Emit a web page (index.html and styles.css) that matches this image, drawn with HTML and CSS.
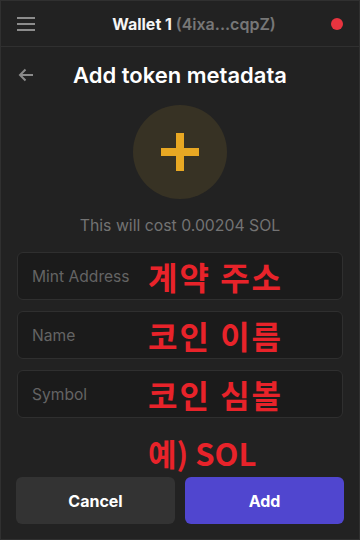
FILE: index.html
```html
<!DOCTYPE html>
<html lang="en">
<head>
    <meta charset="UTF-8">
    <meta name="viewport" content="width=device-width, initial-scale=1.0">
    <title>Add token metadata</title>
    <link rel="stylesheet" href="styles.css">
</head>
<body>
    <div class="app">
        <!-- Top bar -->
        <div class="top-bar">
            <div class="menu-icon">
                <span></span><span></span><span></span>
            </div>
            <div class="wallet-title">Wallet 1 <span class="wallet-address">(4ixa...cqpZ)</span></div>
            <div class="status-dot"></div>
        </div>

        <!-- Page heading -->
        <div class="page-header">
            <svg class="back-arrow" width="16" height="14" viewBox="0 0 16 14">
                <path d="M15 7H2M7.5 1.5L2 7l5.5 5.5" fill="none" stroke="#8a8a8a" stroke-width="2"/>
            </svg>
            <h1>Add token metadata</h1>
        </div>

        <div class="token-icon">
            <svg width="38" height="38" viewBox="0 0 38 38">
                <rect x="15" y="0" width="8" height="38" fill="#e8a823"/>
                <rect x="0" y="15" width="38" height="8" fill="#e8a823"/>
            </svg>
        </div>
        <p class="cost">This will cost 0.00204 SOL</p>

        <!-- Metadata fields -->
        <div class="fields">
            <div class="field">
                <input type="text" placeholder="Mint Address">
                <span class="note">계약 주소</span>
            </div>
            <div class="field">
                <input type="text" placeholder="Name">
                <span class="note">코인 이름</span>
            </div>
            <div class="field">
                <input type="text" placeholder="Symbol">
                <span class="note">코인 심볼</span>
                <span class="note note-below">예) SOL</span>
            </div>
        </div>

        <div class="actions">
            <button class="btn btn-cancel">Cancel</button>
            <button class="btn btn-add">Add</button>
        </div>
    </div>
</body>
</html>
```

FILE: styles.css
```css
* {
    box-sizing: border-box;
}

body {
    margin: 0;
    background-color: #222222;
    font-family: Inter, "Noto Sans", sans-serif;
    color: #f5f5f5;
}

.app {
    width: 360px;
    height: 540px;
    border: 1px solid #303030;
    display: flex;
    flex-direction: column;
}

/* Top bar */
.top-bar {
    height: 46px;
    flex-shrink: 0;
    border-bottom: 1px solid #303030;
    display: flex;
    align-items: center;
    padding: 0 16px;
}

.menu-icon {
    width: 18px;
    display: flex;
    flex-direction: column;
    gap: 4px;
}

.menu-icon span {
    display: block;
    height: 2px;
    background-color: #8c8c8c;
}

.wallet-title {
    flex: 1;
    text-align: center;
    font-size: 16px;
    font-weight: 700;
    padding-left: 22px;
}

.wallet-address {
    color: #777;
    font-weight: 600;
}

.status-dot {
    width: 12px;
    height: 12px;
    border-radius: 50%;
    background-color: #e8343f;
}

/* Heading */
.page-header {
    height: 55px;
    display: flex;
    align-items: center;
    padding: 0 16px;
}

.back-arrow {
    flex-shrink: 0;
    margin-left: 1px;
}

.page-header h1 {
    flex: 1;
    margin: 0 0 0 -17px;
    text-align: center;
    font-size: 22px;
    font-weight: 600;
    color: #fff;
}

.token-icon {
    width: 94px;
    height: 94px;
    margin: 3px auto 0;
    border-radius: 50%;
    background-color: #373224;
    display: flex;
    align-items: center;
    justify-content: center;
}

.cost {
    margin: 17px 0 0;
    text-align: center;
    font-size: 15.8px;
    line-height: 20px;
    color: #737373;
}

/* Fields */
.fields {
    margin-top: 16px;
    padding: 0 16px;
    display: flex;
    flex-direction: column;
    gap: 11px;
}

.field {
    position: relative;
}

.field input {
    width: 100%;
    height: 48px;
    padding: 0 14px;
    border: 1px solid #2f2f2f;
    border-radius: 6px;
    background-color: #1b1b1b;
    font-family: Inter, "Noto Sans", sans-serif;
    font-size: 15.6px;
    color: #ddd;
    outline: none;
}

.field input::placeholder {
    color: #646464;
}

/* red annotation written over the form */
.note {
    position: absolute;
    left: 131px;
    top: 5px;
    font-family: "Noto Sans CJK KR", sans-serif;
    font-size: 32px;
    font-weight: 700;
    line-height: 38px;
    letter-spacing: 2px;
    color: #e8232a;
    pointer-events: none;
}

.note-below {
    top: 64px;
    font-size: 31px;
    letter-spacing: 0;
}

/* Buttons */
.actions {
    margin-top: auto;
    padding: 0 15px 15px 15px;
    display: flex;
    gap: 10px;
}

.btn {
    flex: 1;
    height: 47px;
    border: none;
    border-radius: 6px;
    font-family: Inter, "Noto Sans", sans-serif;
    font-size: 16px;
    font-weight: 700;
    color: #fff;
    cursor: pointer;
}

.btn-cancel {
    background-color: #333333;
}

.btn-add {
    background-color: #5046cf;
}
```
